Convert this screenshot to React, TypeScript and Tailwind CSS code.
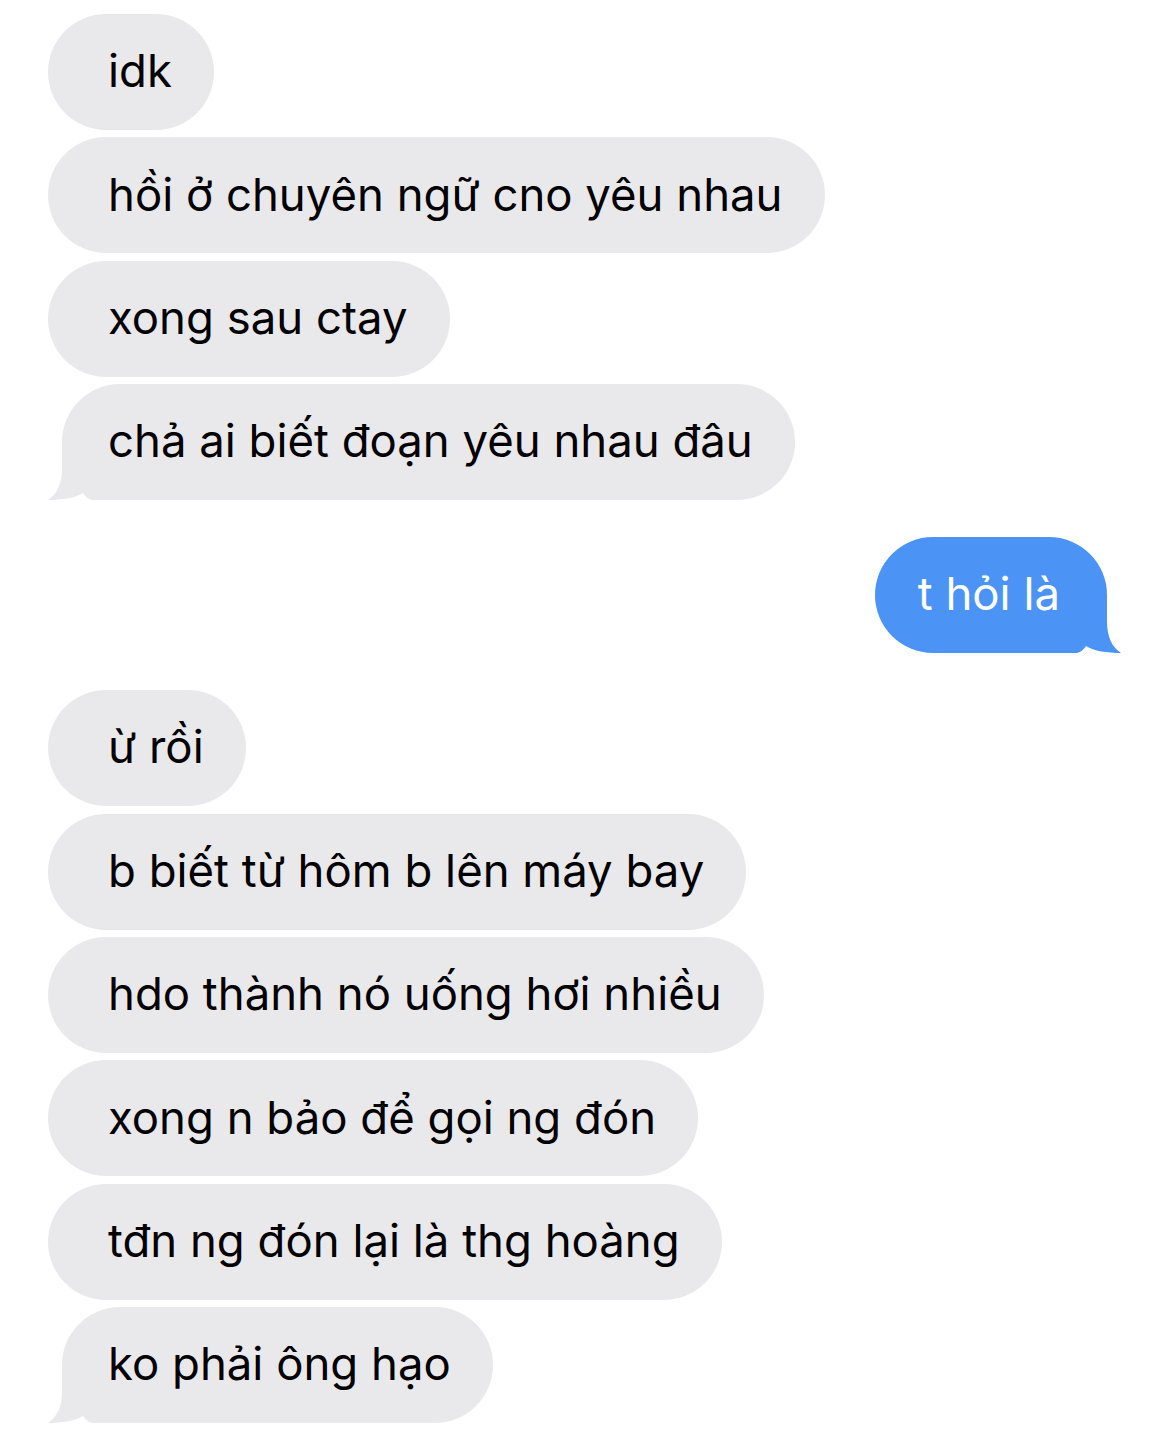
import React from 'react';

type Msg = { text: string; me?: boolean; tail?: boolean; gapTop?: number };

const messages: Msg[] = [
  { text: 'idk', gapTop: 14 },
  { text: 'hồi ở chuyên ngữ cno yêu nhau' },
  { text: 'xong sau ctay' },
  { text: 'chả ai biết đoạn yêu nhau đâu', tail: true },
  { text: 't hỏi là', me: true, tail: true, gapTop: 37 },
  { text: 'ừ rồi', gapTop: 37 },
  { text: 'b biết từ hôm b lên máy bay' },
  { text: 'hdo thành nó uống hơi nhiều' },
  { text: 'xong n bảo để gọi ng đón' },
  { text: 'tđn ng đón lại là thg hoàng' },
  { text: 'ko phải ông hạo', tail: true },
];

function Tail({ me }: { me?: boolean }) {
  const fill = me ? '#4b94f6' : '#e9e9eb';
  return (
    <svg
      width="80"
      height="58"
      viewBox="0 0 80 58"
      className={`pointer-events-none absolute bottom-0 ${me ? '-right-[14px] -scale-x-100' : '-left-[14px]'}`}
      aria-hidden
    >
      <path
        d="M14 0 L80 0 L80 58 L44 58 C40 57 38 55 35 51 C27 56 14 58 0 58 C9 52 14 42 14 26 Z"
        fill={fill}
      />
    </svg>
  );
}

function Bubble({ msg }: { msg: Msg }) {
  const base =
    'relative flex h-[116px] items-center rounded-[58px] text-[45.5px] leading-none whitespace-nowrap';
  const color = msg.me ? 'bg-[#4b94f6] text-white' : 'bg-[#e9e9eb] text-black';
  const pad = msg.me
    ? 'pl-[43px] pr-[47px]'
    : msg.tail
      ? 'ml-[14px] pl-[46px] pr-[42px]'
      : 'pl-[60px] pr-[42px]';
  return (
    <div
      className={`flex ${msg.me ? 'justify-end pr-[63px]' : 'justify-start pl-[48px]'}`}
      style={{ marginTop: msg.gapTop ?? 7.4 }}
    >
      <div className={`${base} ${color} ${pad}`}>
        {msg.tail && <Tail me={msg.me} />}
        <span className="relative pb-[2px]">{msg.text}</span>
      </div>
    </div>
  );
}

export default function App() {
  return (
    <div
      className="min-h-[1447px] w-[1170px] bg-white"
      style={{ fontFamily: 'Inter, "Noto Sans", sans-serif' }}
    >
      {messages.map((m, i) => (
        <Bubble key={i} msg={m} />
      ))}
    </div>
  );
}
